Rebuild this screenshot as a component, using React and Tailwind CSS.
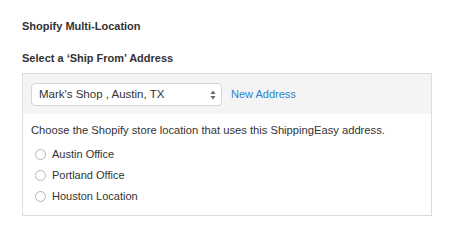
import React from "react";

const locations = ["Austin Office", "Portland Office", "Houston Location"];

const App = () => {
  return (
    <div className="w-[452px] h-[230px] bg-white pl-[22px] pt-[18px] text-[#333] font-['Liberation_Sans',Arial,sans-serif]">
      <h3 className="text-[11px] font-bold leading-[16px]">Shopify Multi-Location</h3>
      <h4 className="mt-[16px] text-[11px] font-bold leading-[16px]">Select a ‘Ship From’ Address</h4>
      <div className="mt-[7px] w-[410px] border border-[#dcdcdc]">
        <div className="flex items-center gap-[9px] bg-[#f4f4f4] px-[8px] pt-[9px] pb-[8px]">
          <div className="flex h-[23px] w-[191px] items-center justify-between rounded-[4px] border border-[#d6d6d6] bg-white pl-[7px] pr-[5px] text-[11.5px]">
            <span>Mark's Shop , Austin, TX</span>
            <svg width="6" height="10" viewBox="0 0 6 10">
              <path d="M3 0.5 L5.5 4 H0.5 Z" fill="#666" />
              <path d="M3 9.5 L5.5 6 H0.5 Z" fill="#666" />
            </svg>
          </div>
          <a className="text-[11px] text-[#2a84cf]">New Address</a>
        </div>
        <div className="px-[8px] pt-[9px] pb-[8px] text-[11px]">
          <p className="text-[11.2px] leading-[15px]">Choose the Shopify store location that uses this ShippingEasy address.</p>
          <div className="mt-[6px] flex flex-col">
            {locations.map((loc) => (
              <label key={loc} className="flex h-[21px] items-center gap-[6px] pl-[4px]">
                <span className="h-[11px] w-[11px] rounded-full border border-[#b5b5b5] bg-white" />
                <span>{loc}</span>
              </label>
            ))}
          </div>
        </div>
      </div>
    </div>
  );
};

export default App;
